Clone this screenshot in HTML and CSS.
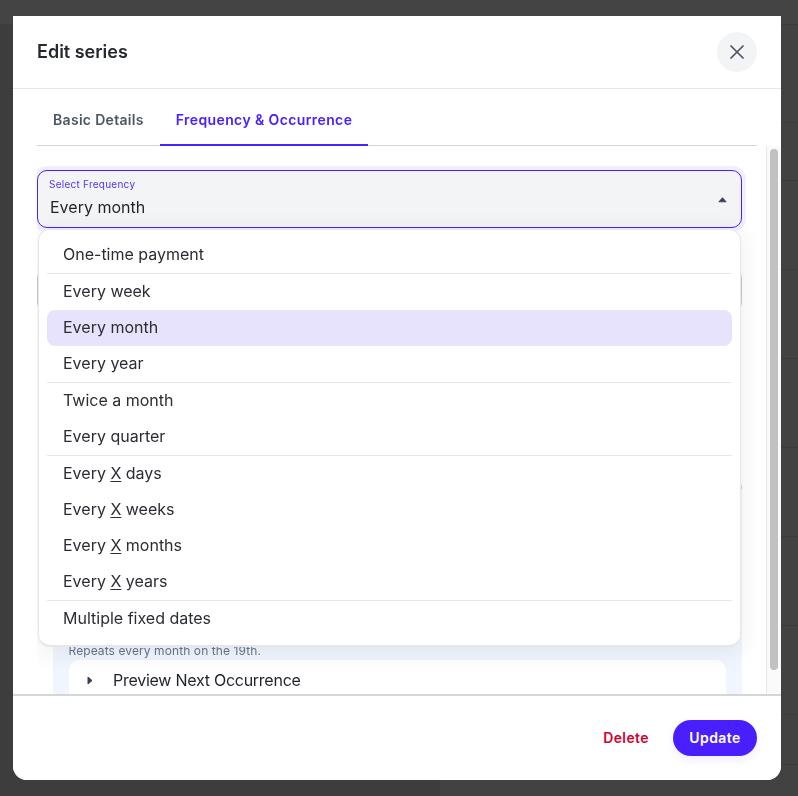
FILE: index.html
```html
<!DOCTYPE html>
<html lang="en">
<head>
<meta charset="utf-8">
<title>Edit series</title>
<link rel="stylesheet" href="styles.css">
</head>
<body>
<div class="page">
  <div class="page-top"></div>
  <div class="page-main">
    <div class="page-side"></div>
    <div class="page-rows">
      <div class="row r98"></div>
      <div class="row r58"></div>
      <div class="row"></div>
      <div class="row"></div>
      <div class="row"></div>
      <div class="row"></div>
      <div class="row"></div>
      <div class="row"></div>
      <div class="row r50"></div>
    </div>
  </div>
</div>
<div class="modal">
  <header class="modal-head">
    <h2>Edit series</h2>
    <button class="close" aria-label="Close">
      <svg width="16" height="16" viewBox="0 0 16 16"><path d="M1.5 1.5L14.5 14.5M14.5 1.5L1.5 14.5" stroke="#4b5563" stroke-width="1.7" fill="none"/></svg>
    </button>
  </header>
  <div class="modal-body">
    <div class="main">
      <nav class="tabs">
        <span class="tab first">Basic Details</span>
        <span class="tab active">Frequency &amp; Occurrence</span>
      </nav>
      <div class="ghost ghost-a"></div>
      <div class="ghost ghost-b"></div>
      <div class="ghost ghost-c"></div>
      <section class="summary">
        <p class="repeat">Repeats every month on the 19th.</p>
        <div class="preview">
          <svg width="6" height="9" viewBox="0 0 6 9"><path d="M1 1L5 4.5L1 8z" fill="#374151" stroke="#374151" stroke-linejoin="round"/></svg>
          <span>Preview Next Occurrence</span>
        </div>
      </section>
      <div class="field-wrap">
        <div class="select">
          <div class="select-text">
            <span class="select-label">Select Frequency</span>
            <span class="select-value">Every month</span>
          </div>
          <svg class="caret" width="9" height="6" viewBox="0 0 10 6"><path d="M5 .5L9 5H1z" fill="#374151" stroke="#374151" stroke-linejoin="round"/></svg>
        </div>
        <ul class="menu">
          <li>One-time payment</li>
          <li class="sep">Every week</li>
          <li class="selected">Every month</li>
          <li>Every year</li>
          <li class="sep">Twice a month</li>
          <li>Every quarter</li>
          <li class="sep">Every <u>X</u> days</li>
          <li>Every <u>X</u> weeks</li>
          <li>Every <u>X</u> months</li>
          <li>Every <u>X</u> years</li>
          <li class="sep">Multiple fixed dates</li>
        </ul>
      </div>
    </div>
    <div class="track"><div class="thumb"></div></div>
  </div>
  <footer class="modal-foot">
    <button class="delete">Delete</button>
    <button class="update">Update</button>
  </footer>
</div>
</body>
</html>
```

FILE: styles.css
```css
* { box-sizing: border-box; }
html, body { margin: 0; height: 100%; }
body { font-family: Inter, "Open Sans", sans-serif; color: #1f2329; background: #424242; overflow: hidden; }

.page { height: 796px; display: flex; flex-direction: column; }
.page-top { height: 25px; flex: none; background: #444; border-bottom: 1px solid #3b3b3b; }
.page-main { flex: 1; display: flex; }
.page-side { width: 440px; flex: none; background: #3d3d3d; }
.page-rows { flex: 1; background: #424242; }
.row { height: 89px; border-bottom: 1px solid #3b3b3b; }
.row.r98 { height: 98px; }
.row.r58 { height: 58px; }
.row.r50 { height: 50px; }

.modal { position: fixed; top: 16px; left: 13px; width: 768px; height: 764px; background: #fff; border-radius: 0 0 14px 14px; display: flex; flex-direction: column; overflow: hidden; }
.modal-head { height: 73px; flex: none; display: flex; align-items: center; justify-content: space-between; padding: 0 24px; border-bottom: 1px solid #e5e7eb; }
.modal-head h2 { margin: 0; font-size: 18px; font-weight: 600; line-height: 24px; color: #25282d; }
.close { width: 40px; height: 40px; border: 0; border-radius: 50%; background: #f3f4f6; display: flex; align-items: center; justify-content: center; padding: 0; }

.modal-body { flex: 1; min-height: 0; display: flex; padding-left: 24px; }
.main { width: 720px; flex: none; position: relative; overflow: hidden; }
.tabs { display: flex; height: 57px; border-bottom: 1px solid #d1d5db; }
.tab { padding: 0 16px; height: 57px; line-height: 62px; font-size: 14px; font-weight: 600; letter-spacing: .39px; color: #4b5563; }
.tab.first { letter-spacing: .31px; }
.tab.active { color: #4a1fff; border-bottom: 2px solid #4a1fff; }

.ghost { position: absolute; left: 0; width: 705px; border: 1px solid #c9ced2; border-radius: 10px; }
.ghost-a { top: 179px; height: 44px; }
.ghost-b { top: 389px; height: 24px; left: 400px; width: 305px; }
.ghost-c { top: 473px; height: 32px; left: 400px; width: 305px; }

.field-wrap { position: absolute; top: 81px; left: 0; width: 705px; z-index: 2; }
.select { height: 58px; border: 1px solid #4a1fff; border-radius: 10px; background: #f3f4f6; box-shadow: 0 0 0 4px #f1efff; display: flex; align-items: center; justify-content: space-between; padding: 0 14px 0 11px; }
.select-text { display: flex; flex-direction: column; margin-top: -4px; }
.select-label { font-size: 10px; line-height: 14px; letter-spacing: .25px; color: #5530ff; }
.select-value { font-size: 16px; line-height: 22px; margin: 5px 0 0 1px; }
.caret { margin-top: 1px; }

.menu { list-style: none; margin: 1px 0 0 1px; padding: 6px 8px 7px; width: 703px; height: 418px; background: #fff; border: 1px solid #e5e7eb; border-bottom-width: 2px; border-radius: 12px; box-shadow: 0 4px 24px rgba(31, 41, 55, .09); }
.menu li { height: 36px; line-height: 34px; padding-left: 16px; font-size: 16px; color: #2a2d33; }
.menu li:first-child { height: 37px; line-height: 36px; }
.menu li.sep { height: 37px; border-top: 1px solid #e5e7eb; }
.menu li.selected { background: #e8e3fd; border-radius: 8px; line-height: 35px; }
.menu li.selected + li { line-height: 35px; }
.menu u { text-underline-offset: 2px; }

.summary { position: absolute; top: 400px; left: 16px; width: 689px; height: 205px; background: #f1f5fd; padding: 154px 16px 0; }
.repeat { margin: 0 0 0 -.5px; font-size: 12px; line-height: 16px; letter-spacing: .09px; color: #64748b; }
.preview { height: 60px; background: #fff; border-radius: 10px 10px 0 0; margin-top: 1px; display: flex; align-items: flex-start; padding: 10px 0 0 18px; gap: 20px; font-size: 16px; line-height: 20px; letter-spacing: -.26px; }
.preview svg { margin-top: 6px; flex: none; }

.track { width: 15px; margin: 57px 0 0 9px; border-left: 1px solid #e5e7eb; background: #fafafa; padding: 3px 0 0 3px; flex: none; }
.thumb { width: 8px; height: 521px; background: #c1c1c1; border-radius: 4px; }

.modal-foot { height: 86px; flex: none; border-top: 2px solid #d3d7dc; display: flex; align-items: center; justify-content: flex-end; padding: 0 24px; gap: 24px; background: #fff; position: relative; z-index: 3; }
.delete { border: 0; background: none; padding: 0 0 2px; font: 600 14px Inter, sans-serif; letter-spacing: .4px; color: #d0022f; }
.update { border: 0; height: 36px; width: 84px; border-radius: 18px; padding: 0 0 2px; background: #4a1fff; color: #fff; font: 600 14px Inter, sans-serif; letter-spacing: .4px; box-shadow: 0 4px 10px rgba(74, 31, 255, .08); }
```
